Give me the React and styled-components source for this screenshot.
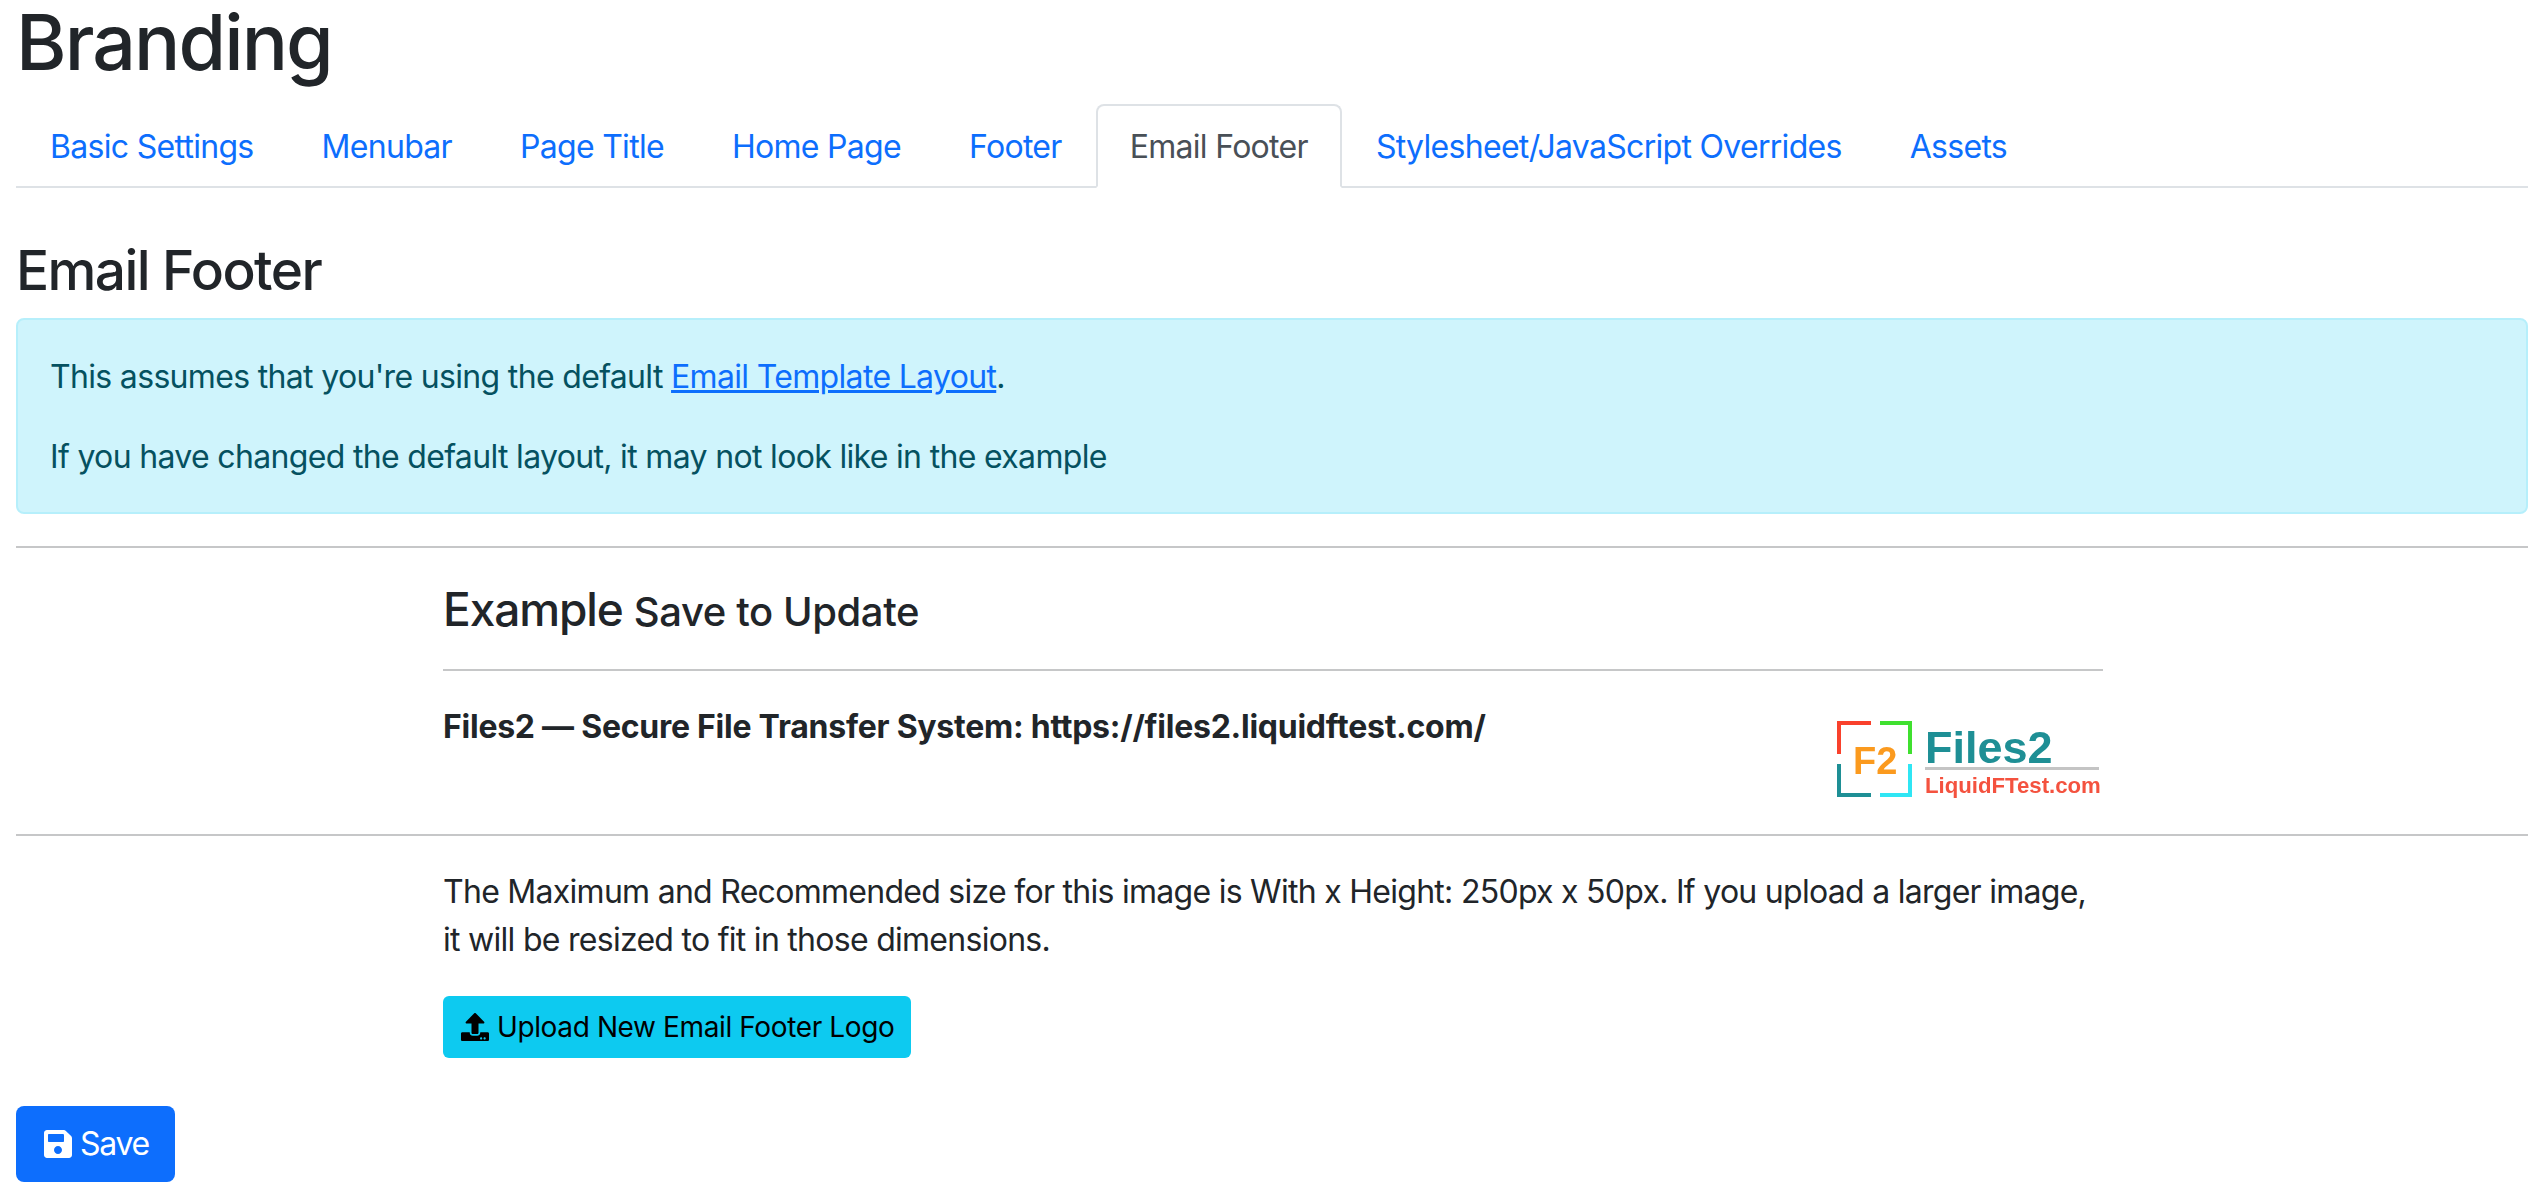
import React from "react"
import styled, { createGlobalStyle } from "styled-components"
import { FaUpload, FaSave } from "react-icons/fa"

const GlobalStyle = createGlobalStyle`
  html, body {
    margin: 0;
    padding: 0;
    background: #fff;
    color: #212529;
    font-family: Inter, "Liberation Sans", sans-serif;
    font-size: 32px;
    line-height: 48px;
    letter-spacing: -0.67px;
  }
  * { box-sizing: border-box; }
`

const tabs = ["Basic Settings", "Menubar", "Page Title", "Home Page", "Footer", "Email Footer", "Stylesheet/JavaScript Overrides", "Assets"]

const Logo = () => (
  <LogoSvg viewBox="0 0 268 80" width="268" height="80">
    <g fill="none" strokeWidth="4">
      <path d="M4 35V4h32" stroke="#f9412c" />
      <path d="M45 4h30v31" stroke="#3fe02f" />
      <path d="M4 45v31h32" stroke="#1e8f95" />
      <path d="M45 76h30V45" stroke="#2fe6f4" />
    </g>
    <LogoText x="18" y="55" fontSize="38" fill="#fb9a1e">F2</LogoText>
    <LogoText x="90" y="44" fontSize="45" fill="#1e8f95">Files2</LogoText>
    <rect x="90" y="48" width="174" height="3" fill="#c4c4c4" />
    <LogoText x="90" y="74" fontSize="22.2" fill="#f4523f">LiquidFTest.com</LogoText>
  </LogoSvg>
)

export default function App() {
  return (
    <Page>
      <GlobalStyle />
      <Title>Branding</Title>
      <Tabs>
        {tabs.map(t => (
          <Tab key={t} $active={t === "Email Footer"}>{t}</Tab>
        ))}
      </Tabs>
      <SectionTitle>Email Footer</SectionTitle>
      <Alert>
        <AlertLine>This assumes that you're using the default <AlertLink>Email Template Layout</AlertLink>.</AlertLine>
        <AlertLine>If you have changed the default layout, it may not look like in the example</AlertLine>
      </Alert>
      <Rule $top={32} />
      <Column>
        <ExampleTitle>Example <small>Save to Update</small></ExampleTitle>
        <Rule $top={27} />
        <FooterRow>
          <FooterText>Files2 — Secure File Transfer System: https://files2.liquidftest.com/</FooterText>
          <Logo />
        </FooterRow>
      </Column>
      <Rule $top={33} />
      <Column>
        <Help>The Maximum and Recommended size for this image is With x Height: 250px x 50px. If you upload a larger image, it will be resized to fit in those dimensions.</Help>
        <UploadButton><FaUpload /> Upload New Email Footer Logo</UploadButton>
      </Column>
      <SaveButton><FaSave /> Save</SaveButton>
    </Page>
  )
}

const Page = styled.div`
  padding: 0 8px 20px 16px;
`

const Title = styled.h1`
  margin: 0 0 16px;
  font-size: 77px;
  line-height: 84px;
  letter-spacing: -1.9px;
  font-weight: 550;
  padding-top: 0;
  padding-bottom: 4px;
`

const Tabs = styled.nav`
  display: flex;
  border-bottom: 2px solid #dee2e6;
`

const Tab = styled.a`
  padding: 17px 32px 15px;
  height: 84px;
  margin-bottom: -2px;
  letter-spacing: -0.7px;
  border: 2px solid ${props => props.$active ? "#dee2e6" : "transparent"};
  border-bottom-color: ${props => props.$active ? "#fff" : "transparent"};
  border-radius: 8px 8px 0 0;
  color: ${props => props.$active ? "#495057" : "#0d6efd"};
  background: ${props => props.$active ? "#fff" : "transparent"};
`

const SectionTitle = styled.h2`
  margin: 52px 0 18px;
  font-size: 55px;
  line-height: 60px;
  letter-spacing: -1.6px;
  font-weight: 550;
`

const Alert = styled.div`
  padding: 33px 32px 30px;
  height: 196px;
  background: #cff4fc;
  border: 2px solid #b6effb;
  border-radius: 8px;
  color: #055160;
`

const AlertLine = styled.p`
  margin: 0 0 32px;
  &:last-child { margin-bottom: 0; }
`

const AlertLink = styled.a`
  color: #0d6efd;
  text-decoration: underline;
`

const Rule = styled.hr`
  margin: ${props => props.$top}px 0 0;
  border: 0;
  border-top: 2px solid #c6c7c8;
`

const Column = styled.div`
  width: 1660px;
  margin-left: 427px;
`

const ExampleTitle = styled.h3`
  margin: 31px 0 0;
  font-size: 46px;
  line-height: 60px;
  letter-spacing: -1.1px;
  font-weight: 550;
  small { font-size: 40px; letter-spacing: -0.4px; }
`

const FooterRow = styled.div`
  display: flex;
  justify-content: space-between;
  align-items: flex-start;
  padding-top: 24px;
  height: 130px;
`

const FooterText = styled.strong`
  font-weight: 700;
  padding-top: 8px;
  line-height: 48px;
  letter-spacing: -0.25px;
`

const LogoSvg = styled.svg`
  display: block;
  margin-top: 24px;
  filter: blur(0.7px);
`

const LogoText = styled.text`
  font-family: "Liberation Sans", Arial, sans-serif;
  font-weight: 700;
  letter-spacing: 0;
`

const Help = styled.p`
  margin: 32px 0 32px;
  letter-spacing: -0.72px;
`

const UploadButton = styled.button`
  display: flex;
  align-items: center;
  gap: 8px;
  height: 62px;
  padding: 0 17px 0 18px;
  border: 0;
  border-radius: 6px;
  background: #0dcaf0;
  color: #000;
  font: inherit;
  font-size: 28px;
  letter-spacing: -0.38px;
`

const SaveButton = styled.button`
  display: flex;
  align-items: center;
  gap: 6px;
  margin-top: 48px;
  height: 76px;
  padding: 0 26px;
  border: 0;
  border-radius: 8px;
  background: #0d6efd;
  color: #fff;
  font: inherit;
  font-size: 32px;
  letter-spacing: -1.3px;
`
